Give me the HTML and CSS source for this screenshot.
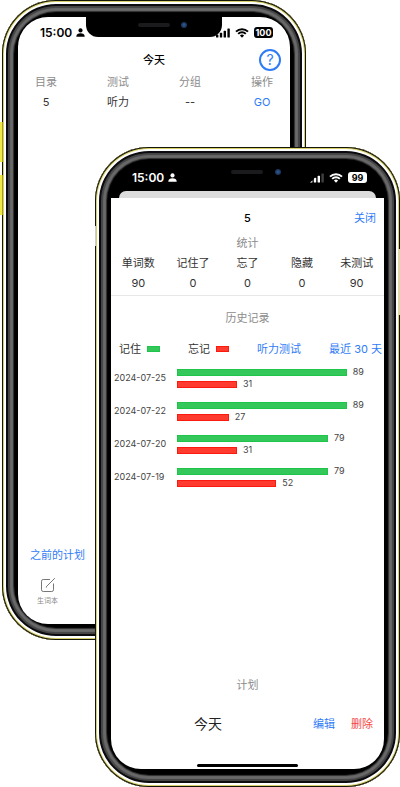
FILE: index.html
```
<!DOCTYPE html>
<html lang="zh-CN">
<head>
  <meta charset="UTF-8" />
  <meta name="viewport" content="width=device-width, initial-scale=1" />
  <title>今天</title>
  <link rel="stylesheet" href="styles.css">
</head>
<body>
  <main class="stage">

    <!-- 后面的手机：今天 -->
    <section class="phone phone-back">
      <span class="side-key key-up"></span>
      <span class="side-key key-down"></span>
      <div class="screen">
        <div class="notch"><i class="speaker"></i><i class="camera"></i></div>
        <div class="status-bar">
          <span class="time">15:00
            <svg class="person" viewBox="0 0 10 10"><circle cx="5" cy="2.7" r="2.3" /><path d="M.3 9.6C.3 7 2.5 5.9 5 5.9S9.7 7 9.7 9.6Z" /></svg>
          </span>
          <span class="status-icons">
            <svg class="signal" viewBox="0 0 14 10"><rect x="0" y="6.5" width="2.4" height="3" rx=".6" /><rect x="3.8" y="4.8" width="2.4" height="4.7" rx=".6" /><rect x="7.6" y="2.8" width="2.4" height="6.7" rx=".6" /><rect x="11.4" y=".5" width="2.4" height="9" rx=".6" /></svg>
            <svg class="wifi" viewBox="0 0 14 10"><path d="M1 3.6a8.6 8.6 0 0 1 12 0M3.2 5.9a5.4 5.4 0 0 1 7.6 0" /><path class="dot" d="M7 9.8 4.9 7.6a3 3 0 0 1 4.2 0Z" /></svg>
            <span class="battery">100</span>
          </span>
        </div>
        <header class="today-head">
          <h1>今天</h1>
          <button class="help" type="button" aria-label="帮助">?</button>
        </header>
        <table class="plan-table">
          <thead>
            <tr><th>目录</th><th>测试</th><th>分组</th><th>操作</th></tr>
          </thead>
          <tbody>
            <tr><td>5</td><td>听力</td><td>--</td><td><a href="#">GO</a></td></tr>
          </tbody>
        </table>
        <a class="earlier" href="#">之前的计划</a>
        <nav class="tab-bar">
          <a class="tab" href="#">
            <svg viewBox="0 0 16 16"><path d="M10 2.5H3.2A1.7 1.7 0 0 0 1.5 4.2v8.6a1.7 1.7 0 0 0 1.7 1.7h8.6a1.7 1.7 0 0 0 1.7-1.7V6.5M6.6 9.4 14.8 1.2M6.6 9.4l-.5.8.9-.4" /></svg>
            生词本
          </a>
        </nav>
      </div>
    </section>

    <!-- 前面的手机：统计 -->
    <section class="phone phone-front">
      <span class="side-key key-mute"></span>
      <span class="side-key key-power"></span>
      <div class="screen">
        <div class="notch"><i class="speaker"></i><i class="camera"></i></div>
        <div class="status-bar">
          <span class="time">15:00
            <svg class="person" viewBox="0 0 10 10"><circle cx="5" cy="2.7" r="2.3" /><path d="M.3 9.6C.3 7 2.5 5.9 5 5.9S9.7 7 9.7 9.6Z" /></svg>
          </span>
          <span class="status-icons">
            <svg class="signal" viewBox="0 0 14 10"><rect x="0" y="6.5" width="2.4" height="3" rx=".6" /><rect x="3.8" y="4.8" width="2.4" height="4.7" rx=".6" /><rect x="7.6" y="2.8" width="2.4" height="6.7" rx=".6" /><rect class="weak" x="11.4" y=".5" width="2.4" height="9" rx=".6" /></svg>
            <svg class="wifi" viewBox="0 0 14 10"><path d="M1 3.6a8.6 8.6 0 0 1 12 0M3.2 5.9a5.4 5.4 0 0 1 7.6 0" /><path class="dot" d="M7 9.8 4.9 7.6a3 3 0 0 1 4.2 0Z" /></svg>
            <span class="battery">99</span>
          </span>
        </div>
        <div class="sheet-edge"></div>
        <div class="sheet">
          <header class="sheet-head">
            <h2>5</h2>
            <button class="link-btn" type="button">关闭</button>
          </header>
          <h3 class="caption">统计</h3>
          <table class="stats">
            <thead>
              <tr><th>单词数</th><th>记住了</th><th>忘了</th><th>隐藏</th><th>未测试</th></tr>
            </thead>
            <tbody>
              <tr><td>90</td><td>0</td><td>0</td><td>0</td><td>90</td></tr>
            </tbody>
          </table>
          <h3 class="caption history-title">历史记录</h3>
          <div class="filters">
            <span class="legend">记住<i class="swatch good"></i></span>
            <span class="legend">忘记<i class="swatch bad"></i></span>
            <button class="link-btn" type="button">听力测试</button>
            <button class="link-btn" type="button">最近 30 天</button>
          </div>
          <div class="chart">
            <div class="row">
              <span class="date">2024-07-25</span>
              <div class="bars">
                <div class="bar-line"><i class="bar good" style="width: 82%"></i>89</div>
                <div class="bar-line"><i class="bar bad" style="width: 29%"></i>31</div>
              </div>
            </div>
            <div class="row">
              <span class="date">2024-07-22</span>
              <div class="bars">
                <div class="bar-line"><i class="bar good" style="width: 82%"></i>89</div>
                <div class="bar-line"><i class="bar bad" style="width: 25%"></i>27</div>
              </div>
            </div>
            <div class="row">
              <span class="date">2024-07-20</span>
              <div class="bars">
                <div class="bar-line"><i class="bar good" style="width: 73%"></i>79</div>
                <div class="bar-line"><i class="bar bad" style="width: 29%"></i>31</div>
              </div>
            </div>
            <div class="row">
              <span class="date">2024-07-19</span>
              <div class="bars">
                <div class="bar-line"><i class="bar good" style="width: 73%"></i>79</div>
                <div class="bar-line"><i class="bar bad" style="width: 48%"></i>52</div>
              </div>
            </div>
          </div>
          <h3 class="caption plan-title">计划</h3>
          <div class="plan-row">
            <span class="plan-name">今天</span>
            <button class="link-btn" type="button">编辑</button>
            <button class="link-btn danger" type="button">删除</button>
          </div>
          <div class="home-bar"></div>
        </div>
      </div>
    </section>

  </main>
</body>
</html>
```
FILE: styles.css
```
* {
  box-sizing: border-box;
}
body {
  margin: 0;
  background: #fff;
  color: #333;
  font-family: Inter, "Noto Sans CJK SC", sans-serif;
  font-size: 11px;
  line-height: 20px;
}
h1, h2, h3 {
  margin: 0;
  font-size: 11px;
}
a {
  color: #2f7cf6;
  text-decoration: none;
}
button {
  padding: 0;
  border: none;
  background: none;
  font: inherit;
  cursor: pointer;
}
table {
  border-collapse: collapse;
  table-layout: fixed;
}
th, td {
  padding: 0;
  font-weight: normal;
  text-align: center;
}

/* 两台手机叠放 */
.stage {
  display: grid;
  min-height: 100vh;
  overflow: hidden;
}
.phone {
  position: relative;
  grid-area: 1 / 1;
  display: flex;
  width: 76%;
  min-height: 640px;
  padding: 17px 16px 16px;
  border-radius: 54px;
  background: #000;
  box-shadow:
    inset 0 0 0 1px #15150a,
    inset 0 0 0 2px #d6d06a,
    inset 0 0 0 4px #fff,
    inset 0 0 0 6px #0b0b10,
    inset 0 0 1px 8px #444,
    inset 0 0 1px 11px #6a6a6a,
    inset 0 0 1px 12px #333;
}
.phone-back {
  align-self: start;
  margin-left: 2px;
}
.phone-front {
  justify-self: end;
  align-self: end;
  width: calc(76% + 1px);
  padding-bottom: 18px;
}
.screen {
  position: relative;
  flex: 1;
  display: flex;
  flex-direction: column;
  border-radius: 30px;
  background: #fff;
  overflow: hidden;
}
.phone-front .screen {
  background: #000;
}

/* 侧边按键 */
.side-key {
  position: absolute;
  left: -2px;
  width: 3px;
  height: 40px;
  background: #f0e94a;
  border-right: 1px solid #a39c20;
}
.key-up {
  top: 122px;
}
.key-down {
  top: 175px;
}
.key-mute {
  left: 0;
  top: 79px;
  width: 1px;
  height: 20px;
  border: none;
  background: #ccc;
}
.key-power {
  left: auto;
  right: 0;
  top: 102px;
  width: 2px;
  height: 66px;
  border: none;
  background: #ddd8a4;
}

/* 刘海 */
.notch {
  position: absolute;
  top: 0;
  left: 25%;
  right: 25%;
  height: 20px;
  border-radius: 0 0 12px 12px;
  background: #000;
}
.speaker {
  position: absolute;
  top: 6px;
  left: 52px;
  width: 32px;
  height: 4px;
  border-radius: 2px;
  background: #1b1b1d;
}
.camera {
  position: absolute;
  top: 5px;
  right: 35px;
  width: 6px;
  height: 6px;
  border-radius: 50%;
  background: radial-gradient(#2f5d9c, #101c30);
}

/* 状态栏 */
.status-bar {
  display: flex;
  justify-content: space-between;
  height: 31px;
  padding: 0 17px 0 22px;
  color: #000;
  fill: currentColor;
}
.phone-front .status-bar {
  height: 27px;
  padding: 0 17px 0 21px;
  color: #fff;
}
.time {
  display: flex;
  align-items: center;
  gap: 4px;
  font-size: 12px;
  font-weight: 600;
}
.person {
  width: 9px;
  height: 9px;
}
.status-icons {
  display: flex;
  align-items: center;
  gap: 5px;
}
.signal {
  width: 14px;
  height: 10px;
}
.weak {
  opacity: 0.25;
}
.wifi {
  width: 14px;
  height: 10px;
  fill: none;
  stroke: currentColor;
  stroke-width: 2;
}
.wifi .dot {
  fill: currentColor;
  stroke: none;
}
.battery {
  width: 19px;
  height: 11px;
  border-radius: 3px;
  background: #000;
  color: #fff;
  font-size: 9px;
  font-weight: 700;
  line-height: 11px;
  text-align: center;
}
.phone-front .battery {
  background: #fff;
  color: #000;
}

/* 今天 */
.today-head {
  display: grid;
  grid-template-columns: 1fr auto 1fr;
  align-items: center;
  height: 24px;
  padding-right: 9px;
  padding-left: 9px;
  color: #000;
}
.today-head h1 {
  grid-column: 2;
  font-weight: 500;
}
.help {
  justify-self: end;
  width: 22px;
  height: 22px;
  border: 2px solid #2f7cf6;
  border-radius: 50%;
  color: #2f7cf6;
  font-size: 14px;
  line-height: 18px;
}
.plan-table {
  width: calc(100% + 16px);
  margin: 0 -8px;
}
.plan-table th {
  color: #8c8c8c;
}
.earlier {
  margin-top: auto;
  margin-left: 12px;
}
.tab-bar {
  display: flex;
  height: 59px;
  padding: 12px 19px 0;
}
.tab {
  display: flex;
  flex-direction: column;
  align-items: center;
  gap: 3px;
  color: #888;
  font-size: 7px;
  line-height: 10px;
}
.tab svg {
  width: 16px;
  height: 16px;
  fill: none;
  stroke: #777;
  stroke-width: 1;
}

/* 统计弹层 */
.sheet-edge {
  height: 7px;
  margin: 0 8px;
  border-radius: 7px 7px 0 0;
  background: #dcdcdc;
}
.sheet {
  flex: 1;
  display: flex;
  flex-direction: column;
  background: #fff;
}
.sheet-head {
  display: grid;
  grid-template-columns: 1fr auto 1fr;
  align-items: center;
  height: 35px;
  padding: 4px 8px 0;
  color: #000;
}
.sheet-head h2 {
  grid-column: 2;
  font-weight: 500;
}
.sheet-head .link-btn {
  justify-self: end;
}
.link-btn {
  color: #2f7cf6;
}
.danger {
  color: #f5473f;
}
.caption {
  color: #8c8c8c;
  font-weight: normal;
  text-align: center;
}
.stats {
  width: 100%;
  border-bottom: 1px solid #e8e8e8;
}
.stats tbody td {
  padding-bottom: 2px;
}
.history-title {
  margin-top: 12px;
}
.filters {
  display: flex;
  justify-content: space-between;
  margin-top: 11px;
  padding: 0 2px 0 8px;
}
.legend {
  display: flex;
  align-items: center;
  gap: 6px;
}
.swatch {
  width: 13px;
  height: 6px;
}
.good {
  background: #34c759;
  border: 1px solid #1fc44a;
}
.bad {
  background: #ff3b30;
  border: 1px solid #fb1a10;
}

/* 历史记录条形图 */
.chart {
  display: flex;
  flex-direction: column;
  gap: 9px;
  margin-top: 7px;
  color: #444;
  font-size: 9px;
}
.row {
  display: flex;
  align-items: center;
}
.date {
  width: 66px;
  padding-left: 3px;
  line-height: 12px;
}
.bars {
  flex: 1;
}
.bar-line {
  display: flex;
  align-items: center;
  gap: 6px;
  line-height: 12px;
}
.bar {
  height: 7px;
}

/* 计划 */
.plan-title {
  margin-top: auto;
}
.plan-row {
  display: grid;
  grid-template-columns: 1fr 38px 38px;
  align-items: center;
  margin: 19px 3px 30px 0;
}
.plan-name {
  color: #222;
  font-size: 14px;
  text-align: center;
}
.home-bar {
  align-self: center;
  width: 37%;
  height: 3px;
  margin-bottom: 2px;
  border-radius: 2px;
  background: #000;
}
```
